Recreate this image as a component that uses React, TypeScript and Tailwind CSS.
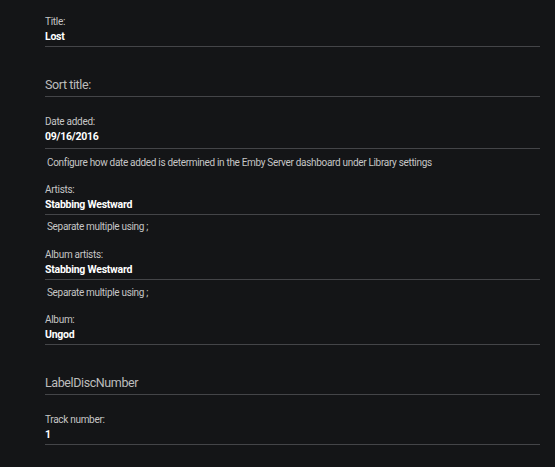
import React from 'react';

type Field = {
  label: string;
  value?: string;
  box: string;
  big?: boolean;
  pad?: string;
};

function FieldRow({ label, value, box, big, pad = 'pb-[2px]' }: Field) {
  if (big) {
    return (
      <div className={`flex flex-col justify-end border-b border-[#444548] ${box}`}>
        <div className="text-[12.5px] leading-[18px] pb-[2px] tracking-[-0.4px] text-[#bdbdbd]">{label}</div>
      </div>
    );
  }
  return (
    <div className={`flex flex-col justify-end border-b border-[#444548] ${box}`}>
      <div className="text-[10px] leading-[15px] tracking-[-0.3px] text-[#c6c6c6]">{label}</div>
      <div className={`text-[10.5px] leading-[15px] tracking-[-0.25px] font-bold text-white ${pad}`}>
        {value}
      </div>
    </div>
  );
}

function Desc({ text, box }: { text: string; box: string }) {
  return (
    <div className={`h-[24px] pl-[2px] text-[10px] leading-[16px] tracking-[-0.32px] text-[#c6c6c6] ${box}`}>
      {text}
    </div>
  );
}

export default function App() {
  return (
    <div className="w-[555px] h-[467px] bg-[#141517] overflow-hidden font-['Roboto','Noto_Sans',sans-serif]">
      <div className="ml-[45px] w-[495px] flex flex-col">
        <FieldRow label="Title:" value="Lost" box="h-[47px]" />
        <FieldRow label="Sort title:" box="h-[50px]" big />
        <FieldRow label="Date added:" value="09/16/2016" box="h-[52px]" pad="pb-[4px]" />
        <Desc
          text="Configure how date added is determined in the Emby Server dashboard under Library settings"
          box="pt-[6px]"
        />
        <FieldRow label="Artists:" value="Stabbing Westward" box="h-[42px]" />
        <Desc text="Separate multiple using ;" box="pt-[4px]" />
        <FieldRow label="Album artists:" value="Stabbing Westward" box="h-[41px]" />
        <Desc text="Separate multiple using ;" box="pt-[5px]" />
        <FieldRow label="Album:" value="Ungod" box="h-[41px]" />
        <FieldRow label="LabelDiscNumber" box="h-[50px]" big />
        <FieldRow label="Track number:" value="1" box="h-[50px]" />
      </div>
    </div>
  );
}
